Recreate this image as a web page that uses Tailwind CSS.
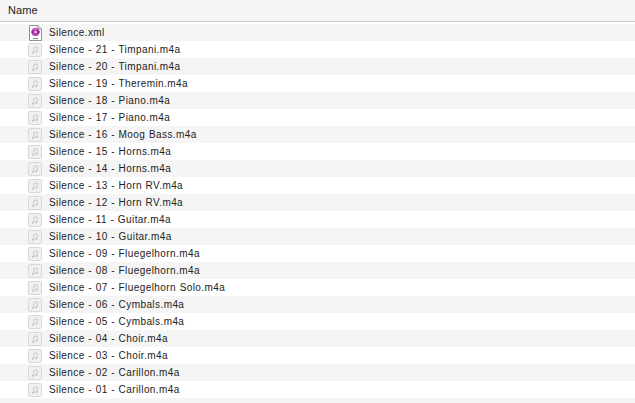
<!DOCTYPE html>
<html lang="en">
<head>
  <meta charset="UTF-8">
  <title>Silence</title>
  <script src="https://cdn.jsdelivr.net/npm/@tailwindcss/browser@4"></script>
</head>
<body class="bg-white w-[635px] h-[403px] overflow-hidden font-['Liberation_Sans',sans-serif] text-[10px] tracking-[0.42px] [word-spacing:0.4px] text-[#222]">
  <svg class="absolute w-0 h-0">
    <symbol id="audio" viewBox="0 0 14 14">
      <rect x="0.5" y="0.5" width="13" height="13" rx="1" fill="#f0f0f0" stroke="#d8d8d8"/>
      <path d="M5.8 9.6V4.6l3.4-.8v5" fill="none" stroke="#c2c2c2" stroke-width=".8"/>
      <circle cx="4.9" cy="9.7" r="1" fill="#c2c2c2"/>
      <circle cx="8.3" cy="8.9" r="1" fill="#c2c2c2"/>
    </symbol>
  </svg>
  <header class="h-[22px] bg-[#f5f5f5] border-b border-[#c8c8c8] flex items-center pl-[8px] pb-[1px] text-[11px] tracking-[0.1px] text-[#1c1c1c]">Name</header>
  <main class="pt-[2px]">
    <div class="h-[17px] bg-[#f5f5f5] flex items-center">
      <svg class="ml-[29px] w-[13px] h-[16px]" viewBox="0 0 13 16">
        <path d="M0.5 0.5H9L12.5 4V15.5H0.5Z" fill="#fff" stroke="#8f8f8f"/>
        <path d="M9 0.5V4H12.5" fill="#ddd" stroke="#8f8f8f"/>
        <circle cx="6.5" cy="7" r="4" fill="#b13fb4"/>
        <circle cx="6.5" cy="3.9" r="1.3" fill="#d65fd0"/>
        <circle cx="3.6" cy="7" r="1.3" fill="#8f2a9a"/>
        <circle cx="9.4" cy="7" r="1.3" fill="#8f2a9a"/>
        <circle cx="6.5" cy="7" r="1.3" fill="#f0b8e8"/>
        <rect x="4" y="13" width="5" height="1" fill="#888"/>
      </svg>
      <span class="ml-[7px]">Silence.xml</span>
    </div>
    <div class="h-[17px] bg-white flex items-center"><svg class="ml-[28px] w-[14px] h-[14px]"><use href="#audio"/></svg><span class="ml-[7px]">Silence - 21 - Timpani.m4a</span></div>
    <div class="h-[17px] bg-[#f5f5f5] flex items-center"><svg class="ml-[28px] w-[14px] h-[14px]"><use href="#audio"/></svg><span class="ml-[7px]">Silence - 20 - Timpani.m4a</span></div>
    <div class="h-[17px] bg-white flex items-center"><svg class="ml-[28px] w-[14px] h-[14px]"><use href="#audio"/></svg><span class="ml-[7px]">Silence - 19 - Theremin.m4a</span></div>
    <div class="h-[17px] bg-[#f5f5f5] flex items-center"><svg class="ml-[28px] w-[14px] h-[14px]"><use href="#audio"/></svg><span class="ml-[7px]">Silence - 18 - Piano.m4a</span></div>
    <div class="h-[17px] bg-white flex items-center"><svg class="ml-[28px] w-[14px] h-[14px]"><use href="#audio"/></svg><span class="ml-[7px]">Silence - 17 - Piano.m4a</span></div>
    <div class="h-[17px] bg-[#f5f5f5] flex items-center"><svg class="ml-[28px] w-[14px] h-[14px]"><use href="#audio"/></svg><span class="ml-[7px]">Silence - 16 - Moog Bass.m4a</span></div>
    <div class="h-[17px] bg-white flex items-center"><svg class="ml-[28px] w-[14px] h-[14px]"><use href="#audio"/></svg><span class="ml-[7px]">Silence - 15 - Horns.m4a</span></div>
    <div class="h-[17px] bg-[#f5f5f5] flex items-center"><svg class="ml-[28px] w-[14px] h-[14px]"><use href="#audio"/></svg><span class="ml-[7px]">Silence - 14 - Horns.m4a</span></div>
    <div class="h-[17px] bg-white flex items-center"><svg class="ml-[28px] w-[14px] h-[14px]"><use href="#audio"/></svg><span class="ml-[7px]">Silence - 13 - Horn RV.m4a</span></div>
    <div class="h-[17px] bg-[#f5f5f5] flex items-center"><svg class="ml-[28px] w-[14px] h-[14px]"><use href="#audio"/></svg><span class="ml-[7px]">Silence - 12 - Horn RV.m4a</span></div>
    <div class="h-[17px] bg-white flex items-center"><svg class="ml-[28px] w-[14px] h-[14px]"><use href="#audio"/></svg><span class="ml-[7px]">Silence - 11 - Guitar.m4a</span></div>
    <div class="h-[17px] bg-[#f5f5f5] flex items-center"><svg class="ml-[28px] w-[14px] h-[14px]"><use href="#audio"/></svg><span class="ml-[7px]">Silence - 10 - Guitar.m4a</span></div>
    <div class="h-[17px] bg-white flex items-center"><svg class="ml-[28px] w-[14px] h-[14px]"><use href="#audio"/></svg><span class="ml-[7px]">Silence - 09 - Fluegelhorn.m4a</span></div>
    <div class="h-[17px] bg-[#f5f5f5] flex items-center"><svg class="ml-[28px] w-[14px] h-[14px]"><use href="#audio"/></svg><span class="ml-[7px]">Silence - 08 - Fluegelhorn.m4a</span></div>
    <div class="h-[17px] bg-white flex items-center"><svg class="ml-[28px] w-[14px] h-[14px]"><use href="#audio"/></svg><span class="ml-[7px]">Silence - 07 - Fluegelhorn Solo.m4a</span></div>
    <div class="h-[17px] bg-[#f5f5f5] flex items-center"><svg class="ml-[28px] w-[14px] h-[14px]"><use href="#audio"/></svg><span class="ml-[7px]">Silence - 06 - Cymbals.m4a</span></div>
    <div class="h-[17px] bg-white flex items-center"><svg class="ml-[28px] w-[14px] h-[14px]"><use href="#audio"/></svg><span class="ml-[7px]">Silence - 05 - Cymbals.m4a</span></div>
    <div class="h-[17px] bg-[#f5f5f5] flex items-center"><svg class="ml-[28px] w-[14px] h-[14px]"><use href="#audio"/></svg><span class="ml-[7px]">Silence - 04 - Choir.m4a</span></div>
    <div class="h-[17px] bg-white flex items-center"><svg class="ml-[28px] w-[14px] h-[14px]"><use href="#audio"/></svg><span class="ml-[7px]">Silence - 03 - Choir.m4a</span></div>
    <div class="h-[17px] bg-[#f5f5f5] flex items-center"><svg class="ml-[28px] w-[14px] h-[14px]"><use href="#audio"/></svg><span class="ml-[7px]">Silence - 02 - Carillon.m4a</span></div>
    <div class="h-[17px] bg-white flex items-center"><svg class="ml-[28px] w-[14px] h-[14px]"><use href="#audio"/></svg><span class="ml-[7px]">Silence - 01 - Carillon.m4a</span></div>
    <div class="h-[17px] bg-[#f5f5f5]"></div>
  </main>
</body>
</html>
